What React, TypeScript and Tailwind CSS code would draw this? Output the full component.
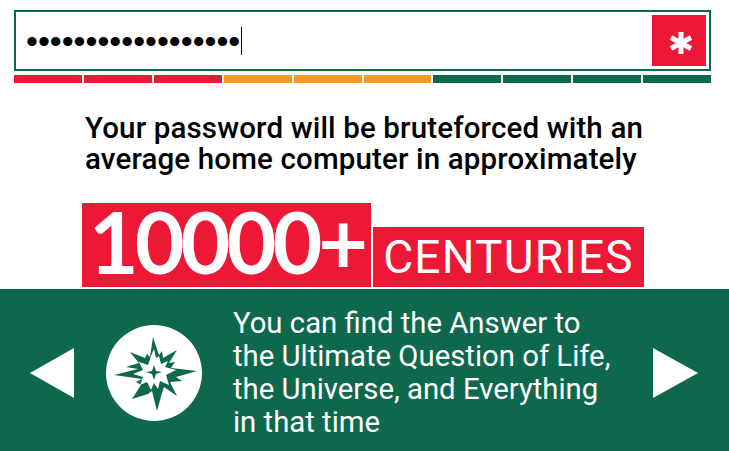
const segments = [
  "bg-[#ec1835]", "bg-[#ec1835]", "bg-[#ec1835]",
  "bg-[#ef9a20]", "bg-[#ef9a20]", "bg-[#ef9a20]",
  "bg-[#0e684d]", "bg-[#0e684d]", "bg-[#0e684d]", "bg-[#0e684d]",
];

const star =
  "47,12 53,30 56,26 57,33 71,25 63,38 69,37 65,43 91,46 70,52 76,56 64,57 71,71 58,62 56,68 51,86 46,66 42,69 26,74 35,60 30,57 36,54 8,50 32,44 20,42 33,38 24,27 39,33 41,29 44,32";
const inner =
  "48,24 50,33 53,31 55,39 62,36 59,42 70,45 60,50 63,60 54,56 52,64 48,58 45,65 41,57 34,60 37,52 27,49 37,45 33,37 42,40 45,31";

function Arrow({ left }: { left?: boolean }) {
  return (
    <svg width={left ? 44 : 45} height="50" viewBox={left ? "0 0 44 50" : "0 0 45 50"} className="shrink-0">
      <polygon points={left ? "0,25 44,0 44,50" : "0,0 45,25 0,50"} fill="#fff" />
    </svg>
  );
}

export default function App() {
  return (
    <div className="w-[729px] h-[451px] bg-white flex flex-col overflow-hidden font-['Roboto',sans-serif]">
      <div className="pl-[14px] pr-[18px] pt-[10px] shrink-0">
        <div className="h-[61px] border-2 border-[#0e684d] flex items-center justify-between pl-[10px] pr-[3px]">
          <div className="flex items-center h-[28px]">
            <span className="text-[34px] leading-[28px] text-black font-['Liberation_Sans',sans-serif]">
              {"•".repeat(18)}
            </span>
            <span className="w-px h-[28px] bg-black ml-[1px]" />
          </div>
          <div className="w-[54px] h-[51px] bg-[#ec1835] flex items-center justify-center">
            <svg width="24" height="24" viewBox="0 0 24 24" className="mt-[5px] ml-[3px]">
              <g stroke="#fff" strokeWidth="5">
                <line x1="12" y1="1" x2="12" y2="23" />
                <line x1="2" y1="6.5" x2="22" y2="17.5" />
                <line x1="22" y1="6.5" x2="2" y2="17.5" />
              </g>
            </svg>
          </div>
        </div>
        <div className="flex gap-[2px] mt-[4px]">
          {segments.map((color, i) => (
            <div key={i} className={`flex-1 h-[8px] ${color}`} />
          ))}
        </div>
      </div>

      <div className="pl-[85px] pt-[30px] text-[29.5px] leading-[31px] font-medium tracking-[0.15px] text-black shrink-0">
        <p>Your password will be bruteforced with an</p>
        <p>average home computer in approximately</p>
      </div>

      <div className="flex items-end gap-[2px] pl-[82px] mt-[28px] shrink-0">
        <div className="w-[289px] h-[84px] bg-[#ec1835] text-white text-[86px] leading-[76px] font-bold text-center font-['Lato',sans-serif] tracking-[-4px]">
          10000+
        </div>
        <div className="w-[271px] h-[60px] bg-[#ec1835] text-white text-[46px] leading-[60px] text-center tracking-[1.2px]">
          CENTURIES
        </div>
      </div>

      <div className="mt-[2px] flex-1 bg-[#0e684d] flex items-center pl-[30px] pr-[31px] pt-[6px]">
        <Arrow left />
        <div className="w-[96px] h-[96px] rounded-full bg-white ml-[32px] mr-[31px] shrink-0">
          <svg width="96" height="96" viewBox="0 0 96 96">
            <polygon points={star} fill="#0e684d" />
            <polygon points={inner} fill="#fff" />
            <polygon points="48,40 50,46 56,47 50,49 48,55 46,49 40,47 46,46" fill="#0e684d" />
          </svg>
        </div>
        <div className="flex-1 text-white text-[29.3px] leading-[33px]">
          <p>You can find the Answer to</p>
          <p>the Ultimate Question of Life,</p>
          <p>the Universe, and Everything</p>
          <p>in that time</p>
        </div>
        <Arrow />
      </div>
    </div>
  );
}
